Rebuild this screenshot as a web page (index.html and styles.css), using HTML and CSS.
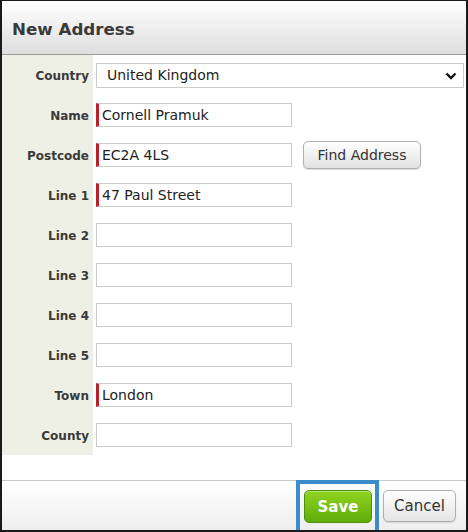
FILE: index.html
```html
<!DOCTYPE html>
<html>
<head>
<meta charset="utf-8">
<link rel="stylesheet" href="styles.css">
</head>
<body>
<div class="dialog">
  <div class="header"><h1 class="title">New Address</h1></div>
  <div class="body">
    <div class="form">
      <div class="row">
        <label class="label">Country</label>
        <div class="select">
          <span>United Kingdom</span>
          <svg class="chev" width="12" height="8" viewBox="0 0 12 8"><path d="M1.5 1.5 L6 6 L10.5 1.5" fill="none" stroke="#111" stroke-width="2.4"/></svg>
        </div>
      </div>
      <div class="row">
        <label class="label">Name</label>
        <div class="input req">Cornell Pramuk</div>
      </div>
      <div class="row">
        <label class="label">Postcode</label>
        <div class="input req">EC2A 4LS</div>
        <button class="btn find">Find Address</button>
      </div>
      <div class="row">
        <label class="label">Line 1</label>
        <div class="input req">47 Paul Street</div>
      </div>
      <div class="row">
        <label class="label">Line 2</label>
        <div class="input"></div>
      </div>
      <div class="row">
        <label class="label">Line 3</label>
        <div class="input"></div>
      </div>
      <div class="row">
        <label class="label">Line 4</label>
        <div class="input"></div>
      </div>
      <div class="row">
        <label class="label">Line 5</label>
        <div class="input"></div>
      </div>
      <div class="row">
        <label class="label">Town</label>
        <div class="input req">London</div>
      </div>
      <div class="row">
        <label class="label">County</label>
        <div class="input"></div>
      </div>
    </div>
  </div>
  <div class="footer">
    <div class="highlight"><button class="btn save">Save</button></div>
    <button class="btn cancel">Cancel</button>
  </div>
</div>
</body>
</html>
```
FILE: styles.css
```css
* { box-sizing: border-box; }
html, body { margin: 0; padding: 0; }
body {
  width: 468px;
  height: 532px;
  font-family: "DejaVu Sans", Verdana, sans-serif;
  color: #333;
  background: #fff;
}
.dialog {
  width: 468px;
  height: 532px;
  border: 2px solid #1a1a1a;
  border-top-width: 1px;
  display: flex;
  flex-direction: column;
  overflow: hidden;
}
.header {
  height: 54px;
  flex: none;
  background: linear-gradient(#ffffff, #dedede);
  border-bottom: 1px solid #9a9a9a;
  display: flex;
  align-items: center;
  padding-left: 10px;
  padding-top: 3px;
}
.title {
  margin: 0;
  font-size: 16.7px;
  font-weight: bold;
  color: #3a3a3a;
}
.body {
  height: 426px;
  flex: none;
  border-bottom: 1px solid #c8c8c8;
}
.form {
  display: flex;
  flex-direction: column;
}
.row {
  height: 40px;
  display: flex;
  align-items: center;
  background: linear-gradient(to right, #eef0e6 91px, #fff 91px);
}
.label {
  width: 91px;
  flex: none;
  text-align: right;
  padding-right: 4px;
  padding-top: 1px;
  font-size: 12px;
  font-weight: bold;
  color: #3a3a3a;
}
.select {
  margin-left: 3px;
  width: 368px;
  height: 25px;
  border: 1px solid #cccccc;
  display: flex;
  align-items: center;
  justify-content: space-between;
  padding: 0 6px 0 10px;
  font-size: 14px;
  color: #222;
}
.chev { margin-top: 1px; }
.input {
  margin-left: 3px;
  width: 196px;
  height: 24px;
  border: 1px solid #cccccc;
  display: flex;
  align-items: center;
  padding-left: 5px;
  font-size: 14px;
  color: #222;
}
.input.req {
  border-left: 3px solid #b8202a;
  padding-left: 3px;
}
.btn {
  font-family: "DejaVu Sans", Verdana, sans-serif;
  font-size: 14px;
  cursor: pointer;
}
.find {
  margin-left: 11px;
  width: 118px;
  height: 28px;
  border: 1px solid #b0b0b0;
  border-radius: 5px;
  background: linear-gradient(#ffffff, #e2e2e2);
  color: #333;
  box-shadow: 0 1px 1px rgba(0,0,0,0.15);
  padding: 0;
}
.footer {
  flex: 1;
  background: linear-gradient(#ffffff, #ececec);
  display: flex;
  justify-content: flex-end;
  align-items: flex-start;
  padding-right: 10px;
}
.highlight {
  margin-top: -1px;
  width: 83px;
  height: 56px;
  border: 4px solid #3a8ccb;
  padding: 6px 0 0 4px;
  margin-right: 4px;
}
.save {
  width: 68px;
  height: 33px;
  border: 1px solid #4e8e10;
  border-radius: 5px;
  background: linear-gradient(#8fd41e, #5fab0a);
  color: #fff;
  font-weight: bold;
  font-size: 15px;
  padding: 0;
  box-shadow: inset 0 1px 0 rgba(255,255,255,0.35);
}
.cancel {
  margin-top: 9px;
  width: 73px;
  height: 32px;
  border: 1px solid #b0b0b0;
  border-radius: 5px;
  background: linear-gradient(#ffffff, #e4e4e4);
  color: #333;
  font-size: 15px;
  padding: 0;
  box-shadow: 0 1px 1px rgba(0,0,0,0.12);
}
```
